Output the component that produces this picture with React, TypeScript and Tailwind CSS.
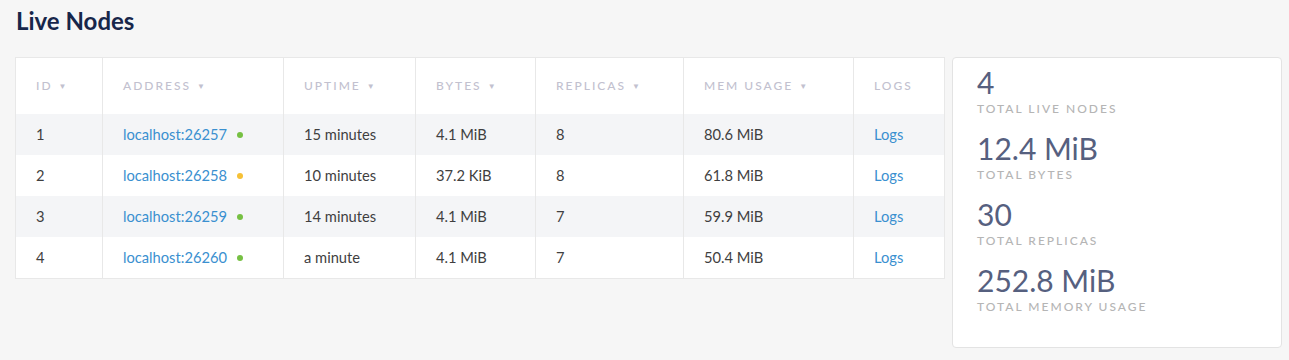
import React from 'react';

type Node = {
    id: number;
    address: string;
    status: 'ok' | 'warn';
    uptime: string;
    bytes: string;
    replicas: number;
    mem: string;
};

const nodes: Node[] = [
    { id: 1, address: 'localhost:26257', status: 'ok', uptime: '15 minutes', bytes: '4.1 MiB', replicas: 8, mem: '80.6 MiB' },
    { id: 2, address: 'localhost:26258', status: 'warn', uptime: '10 minutes', bytes: '37.2 KiB', replicas: 8, mem: '61.8 MiB' },
    { id: 3, address: 'localhost:26259', status: 'ok', uptime: '14 minutes', bytes: '4.1 MiB', replicas: 7, mem: '59.9 MiB' },
    { id: 4, address: 'localhost:26260', status: 'ok', uptime: 'a minute', bytes: '4.1 MiB', replicas: 7, mem: '50.4 MiB' },
];

const columns = [
    { label: 'ID', sort: true },
    { label: 'Address', sort: true },
    { label: 'Uptime', sort: true },
    { label: 'Bytes', sort: true },
    { label: 'Replicas', sort: true },
    { label: 'Mem Usage', sort: true },
    { label: 'Logs', sort: false },
];

const stats = [
    { value: '4', label: 'Total Live Nodes' },
    { value: '12.4 MiB', label: 'Total Bytes' },
    { value: '30', label: 'Total Replicas' },
    { value: '252.8 MiB', label: 'Total Memory Usage' },
];

const gridCols = 'grid grid-cols-[87px_181px_132px_120px_148px_170px_90px]';
const cell = 'flex items-center pl-5 border-r border-[#e8e8e8] last:border-r-0';

const NodesTable: React.FC = () => {
    return (
        <div className="w-[930px] border border-[#e8e8e8] bg-white">
            <div className={`${gridCols} h-[56px]`}>
                {columns.map((c) => (
                    <div key={c.label} className={cell}>
                        <span className="text-[12px] font-medium uppercase tracking-[2px] text-[#c2c1cf]">
                            {c.label}
                        </span>
                        {c.sort && <span className="ml-[6px] text-[8px] text-[#c2c1cf]">▼</span>}
                    </div>
                ))}
            </div>
            {nodes.map((n, i) => (
                <div key={n.id} className={`${gridCols} h-[41px] text-[14.7px] text-[#3f3f3f] ${i % 2 === 0 ? 'bg-[#f4f5f7]' : 'bg-white'}`}>
                    <div className={cell}>{n.id}</div>
                    <div className={cell}>
                        <span className="text-[#3a90d0]">{n.address}</span>
                        <span className={`ml-[10px] w-[6px] h-[6px] rounded-full ${n.status === 'ok' ? 'bg-[#76c043]' : 'bg-[#f6c136]'}`} />
                    </div>
                    <div className={cell}>{n.uptime}</div>
                    <div className={cell}>{n.bytes}</div>
                    <div className={cell}>{n.replicas}</div>
                    <div className={cell}>{n.mem}</div>
                    <div className={cell}>
                        <span className="text-[#3a90d0]">Logs</span>
                    </div>
                </div>
            ))}
        </div>
    );
};

const Summary: React.FC = () => {
    return (
        <div className="w-[330px] h-[291px] rounded-[4px] border border-[#e3e3e3] bg-white pl-6 pt-2">
            {stats.map((s) => (
                <div key={s.label} className="mb-[15px]">
                    <div className="text-[30px] leading-[32px] text-[#56607f]">{s.value}</div>
                    <div className="mt-[3px] text-[12px] leading-[16px] font-medium uppercase tracking-[2px] text-[#b5b5b5]">
                        {s.label}
                    </div>
                </div>
            ))}
        </div>
    );
};

export default function App() {
    return (
        <div className="min-h-[360px] bg-[#f6f6f6] pl-[15px] pt-[7px]" style={{ fontFamily: 'Lato, "Noto Sans", sans-serif' }}>
            <h1 className="pl-[1px] text-[24px] leading-[28px] font-bold text-[#17264a]">Live Nodes</h1>
            <div className="mt-[22px] flex items-start gap-[7px]">
                <NodesTable />
                <Summary />
            </div>
        </div>
    );
}
